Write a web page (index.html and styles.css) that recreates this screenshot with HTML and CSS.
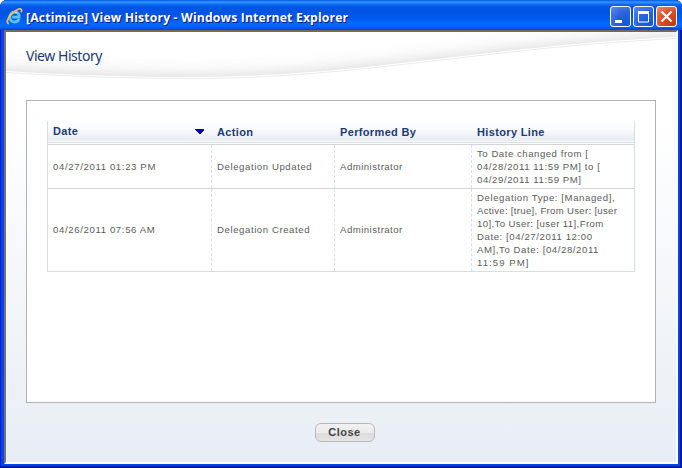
FILE: index.html
```html
<!DOCTYPE html>
<html lang="en">
<head>
<meta charset="utf-8">
<title>[Actimize] View History</title>
<link rel="stylesheet" href="styles.css">
</head>
<body>
<div class="window">
  <header class="titlebar">
    <svg class="ie" width="17" height="17" viewBox="0 0 17 17">
      <path d="M13.3 11.1C12.3 13 10.6 14 8.5 14C5.5 14 3.8 12 3.8 9.1C3.8 6 6 4 8.8 4C11.8 4 13.3 6 13.1 9.1H6.2" fill="none" stroke="#5cc0f2" stroke-width="2.8"/>
      <path d="M4.8 7.2C6 4.7 8.7 3.8 11 4.8" fill="none" stroke="#a5e2ff" stroke-width="1.4"/>
      <path d="M2.9 15.6C.2 15.2 1.1 11 4.6 6.9C8.3 2.7 13.6-.1 15.2 1.4C15.9 2.1 15.6 3.3 15 4.4" fill="none" stroke="#f3bd3d" stroke-width="1.7"/>
    </svg>
    <h1 class="caption">[Actimize] View History - Windows Internet Explorer</h1>
    <div class="controls">
      <span class="ctl"><svg width="21" height="21"><path d="M5 14h7v3H5z" fill="#fff"/></svg></span>
      <span class="ctl"><svg width="21" height="21"><path d="M5.5 6h10v10h-10z" fill="none" stroke="#fff"/><path d="M5 5h11v3H5z" fill="#fff"/></svg></span>
      <span class="ctl ctl-close"><svg width="21" height="21"><path d="M5.5 5.5l10 10M15.5 5.5l-10 10" fill="none" stroke="#fff" stroke-width="2.2"/></svg></span>
    </div>
  </header>
  <main class="page">
    <svg class="wave" width="670" height="50" viewBox="6 32 670 50">
      <defs>
        <clipPath id="swoosh"><path d="M6 32H676V37C600 41 540 47 480 54C400 63 300 77 195 77C130 77 70 75 6 71Z"/></clipPath>
        <filter id="soft" filterUnits="userSpaceOnUse" x="-40" y="0" width="780" height="140"><feGaussianBlur stdDeviation="9"/></filter>
      </defs>
      <g clip-path="url(#swoosh)">
        <path d="M-60 67C70 75 130 77 195 77C300 77 400 63 480 54C540 47 600 41 740 34V62C600 69 540 75 480 82C400 91 300 105 195 105C130 105 70 103-60 95Z" fill="#d2d2d2" filter="url(#soft)"/>
      </g>
      <path d="M676 38.5C600 42.5 540 48.5 480 55.5C400 64.5 300 78.5 195 78.5C130 78.5 70 76.5 6 72.5" fill="none" stroke="#e9e9e9" stroke-width=".9"/>
    </svg>
    <h2 class="heading">View History</h2>
    <section class="panel">
      <div class="table">
        <div class="row head">
          <div class="cell sorted"><span class="h-date">Date</span><svg width="9" height="5" shape-rendering="crispEdges"><path d="M0 0h9v1L5 5H4L0 1z" fill="#00009c"/></svg></div>
          <div class="cell">Action</div>
          <div class="cell">Performed By</div>
          <div class="cell">History Line</div>
        </div>
        <div class="row first">
          <div class="cell date">04/27/2011 01:23 PM</div>
          <div class="cell">Delegation Updated</div>
          <div class="cell admin">Administrator</div>
          <div class="cell"><p><span class="l1">To Date changed from [</span><br><span>04/28/2011 11:59 PM] to [</span><br><span>04/29/2011 11:59 PM]</span></p></div>
        </div>
        <div class="row second">
          <div class="cell date">04/26/2011 07:56 AM</div>
          <div class="cell">Delegation Created</div>
          <div class="cell admin">Administrator</div>
          <div class="cell"><p><span>Delegation Type: [Managed],</span><br><span class="l5">Active: [true], From User: [user</span><br><span class="l6">10],To User: [user 11],From</span><br><span>Date: [04/27/2011 12:00</span><br><span>AM],To Date: [04/28/2011</span><br><span class="l9">11:59 PM]</span></p></div>
        </div>
      </div>
    </section>
    <button class="close">Close</button>
  </main>
</div>
</body>
</html>
```

FILE: styles.css
```css
* { box-sizing: border-box; }
body { margin: 0; background: #fff; font-family: "Liberation Sans", Arial, sans-serif; overflow: hidden; }
h1, h2, p { margin: 0; font-weight: normal; }
.window {
  width: 682px; height: 468px; padding: 0 4px 4px;
  border-radius: 7px 7px 0 0;
  background: #0046e6;
  box-shadow: inset 1px 0 #0019cf, inset -1px 0 #00138c, inset -2px 0 #001dae, inset 0 -1px #00138c, inset 0 -2px #001ea8;
  overflow: hidden;
}
.titlebar {
  display: flex; align-items: center; height: 30px; margin: 0 -4px; padding: 3px 6px 0;
  background: linear-gradient(#0058e6 0, #3a93ff 2px, #2186ff 3px, #0863ef 5px, #0054e3 8px, #0055e5 14px, #005bf2 19px, #026afe 24px, #0061fc 27px, #0043cf 30px);
}
.ie { flex: none; margin-top: -1px; }
.caption {
  margin: 2px 0 0 3px; color: #fff; white-space: nowrap;
  font: bold 12.2px/16px "Open Sans", sans-serif; letter-spacing: .16px;
  text-shadow: 1px 1px #0a1883;
}
.controls { display: flex; gap: 2px; margin-left: auto; margin-right: -1px; }
.ctl {
  width: 21px; height: 21px; border: 1px solid #fff; border-radius: 3px;
  background: radial-gradient(circle at 85% 90%, #1058dc, #2a62dc 50%, #5b8bf0 100%);
}
.ctl svg { display: block; margin: -1px; }
.ctl-close { background: radial-gradient(circle at 85% 90%, #c33a0c, #dc4a24 50%, #ec8b6c 100%); }
.page {
  position: relative; height: 434px; padding: 17px 0 0 20px;
  border: solid; border-width: 2px; border-color: #6f6a5d #fffdf0 #fffdf0 #77736a;
  background: linear-gradient(#fff 0, #fff 90px, #e8edf5 100%);
}
.wave { position: absolute; left: 0; top: 0; }
.heading { position: relative; height: 51px; color: #203a70; font: 14px/14px "Noto Sans", sans-serif; letter-spacing: -.45px; }
.panel { width: 630px; height: 303px; padding: 20px; border: 1px solid #b2b2b2; background: #fff; }
.table { width: 588px; border: 1px solid #d3dee8; border-top: 0; color: #5c5c5c; font-size: 9.6px; letter-spacing: .58px; }
.row { display: grid; grid-template-columns: 163px 123px 137px 163px; }
.cell { display: flex; align-items: center; padding-left: 5px; white-space: nowrap; }
.cell + .cell { border-left: 1px dashed #d8deea; }
.date { letter-spacing: .63px; }
.second .cell:not(:last-child) { padding-bottom: 1px; }
.admin { letter-spacing: .48px; }
.head {
  height: 24px; color: #1c3b75; font-size: 11px; font-weight: bold; letter-spacing: .35px;
  background: linear-gradient(#fff 0, #fafbfd 8px, #e8ebf1 20px, #fff 20px, #fff 21px, #d4e3f0 21px, #d4e3f0 22px, #fff 22px, #fff 23px, #d2d6d8 23px);
}
.head .cell { padding-bottom: 2px; }
.head .cell + .cell { border-color: transparent; }
.sorted { justify-content: space-between; padding-right: 7px; }
.sorted svg { margin-top: -1px; }
.h-date { margin-top: -2px; }
.first { height: 44px; border-bottom: 1px solid #d2d6d8; }
.second { height: 82px; }
.row p { line-height: 13px; }
.l1 { letter-spacing: .53px; }
.l5 { letter-spacing: .3px; }
.l6 { letter-spacing: .39px; }
.l9 { letter-spacing: 1.05px; }
.close {
  display: block; width: 60px; height: 19px; margin: 20px 0 0 289px; padding: 0 1px 0 0;
  border: 1px solid #b8b8b8; border-radius: 6px; color: #444;
  background: linear-gradient(#f2f2f2 0, #ebebeb 50%, #dcdcdc 55%, #e4e4e4 100%);
  font: bold 11px/15px "Liberation Sans", sans-serif; letter-spacing: .5px;
}
```
